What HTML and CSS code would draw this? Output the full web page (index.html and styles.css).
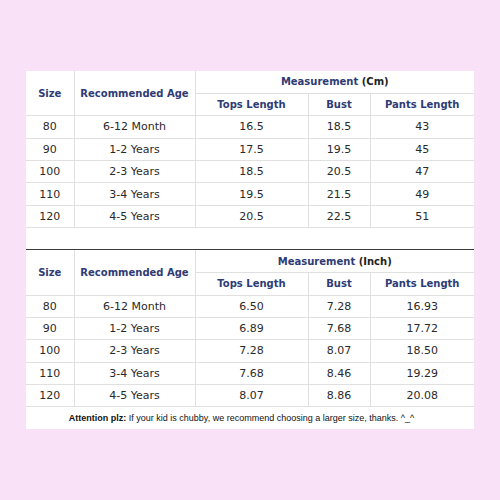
FILE: index.html
```html
<!DOCTYPE html>
<html>
<head>
<meta charset="utf-8">
<link rel="stylesheet" href="styles.css">
</head>
<body>
<div class="panel">
  <table class="chart">
    <colgroup><col class="c1"><col class="c2"><col class="c3"><col class="c4"><col class="c5"></colgroup>
    <tr class="h1">
      <th rowspan="2" class="vl">Size</th>
      <th rowspan="2" class="vl">Recommended Age</th>
      <th colspan="3" class="bb">Measurement <span class="unit">(Cm)</span></th>
    </tr>
    <tr class="h2">
      <th class="vl">Tops Length</th><th class="vl">Bust</th><th>Pants Length</th>
    </tr>
    <tr><td class="vl">80</td><td class="vl">6-12 Month</td><td class="vl">16.5</td><td class="vl">18.5</td><td>43</td></tr>
    <tr><td class="vl">90</td><td class="vl">1-2 Years</td><td class="vl">17.5</td><td class="vl">19.5</td><td>45</td></tr>
    <tr><td class="vl">100</td><td class="vl">2-3 Years</td><td class="vl">18.5</td><td class="vl">20.5</td><td>47</td></tr>
    <tr><td class="vl">110</td><td class="vl">3-4 Years</td><td class="vl">19.5</td><td class="vl">21.5</td><td>49</td></tr>
    <tr><td class="vl">120</td><td class="vl">4-5 Years</td><td class="vl">20.5</td><td class="vl">22.5</td><td>51</td></tr>
  </table>
  <div class="spacer"></div>
  <table class="chart second">
    <colgroup><col class="c1"><col class="c2"><col class="c3"><col class="c4"><col class="c5"></colgroup>
    <tr class="h1">
      <th rowspan="2" class="vl">Size</th>
      <th rowspan="2" class="vl">Recommended Age</th>
      <th colspan="3" class="bb">Measurement <span class="unit">(Inch)</span></th>
    </tr>
    <tr class="h2">
      <th class="vl">Tops Length</th><th class="vl">Bust</th><th>Pants Length</th>
    </tr>
    <tr><td class="vl">80</td><td class="vl">6-12 Month</td><td class="vl">6.50</td><td class="vl">7.28</td><td>16.93</td></tr>
    <tr><td class="vl">90</td><td class="vl">1-2 Years</td><td class="vl">6.89</td><td class="vl">7.68</td><td>17.72</td></tr>
    <tr><td class="vl">100</td><td class="vl">2-3 Years</td><td class="vl">7.28</td><td class="vl">8.07</td><td>18.50</td></tr>
    <tr><td class="vl">110</td><td class="vl">3-4 Years</td><td class="vl">7.68</td><td class="vl">8.46</td><td>19.29</td></tr>
    <tr><td class="vl">120</td><td class="vl">4-5 Years</td><td class="vl">8.07</td><td class="vl">8.86</td><td>20.08</td></tr>
    <tr class="note"><td colspan="5"><b>Attention plz:</b> If your kid is chubby, we recommend choosing a larger size, thanks. ^_^</td></tr>
  </table>
</div>
</body>
</html>
```

FILE: styles.css
```css
html, body {
  margin: 0;
  padding: 0;
  background: #f9e1f7;
}
body {
  width: 500px;
  height: 500px;
  padding-top: 71px;
  padding-left: 26px;
  box-sizing: border-box;
}
.panel {
  width: 448px;
  background: #ffffff;
}
.chart {
  width: 448px;
  border-collapse: collapse;
  table-layout: fixed;
  font-family: "Comic Sans MS", "DejaVu Sans", sans-serif;
}
.c1 { width: 48px; }
.c2 { width: 121px; }
.c3 { width: 113px; }
.c4 { width: 62px; }
.c5 { width: 104px; }
.chart th, .chart td {
  padding: 0;
  text-align: center;
  vertical-align: middle;
  height: 22.4px;
  border-bottom: 1px solid #e0e0e0;
  box-sizing: border-box;
  white-space: nowrap;
}
.chart th {
  font-size: 10px;
  font-weight: 600;
  color: #2f3b74;
}
.chart th .unit {
  color: #222;
}
.chart td {
  font-size: 11px;
  color: #2a2a2a;
}
.chart .vl {
  border-right: 1px solid #e0e0e0;
}
.spacer {
  height: 21px;
  border-bottom: 1px solid #3a3a3a;
}
.chart .note td {
  border-bottom: none;
  font-family: "Liberation Sans", Arial, sans-serif;
  font-size: 9px;
  color: #111;
  height: 22px;
  padding-right: 17px;
}
```
